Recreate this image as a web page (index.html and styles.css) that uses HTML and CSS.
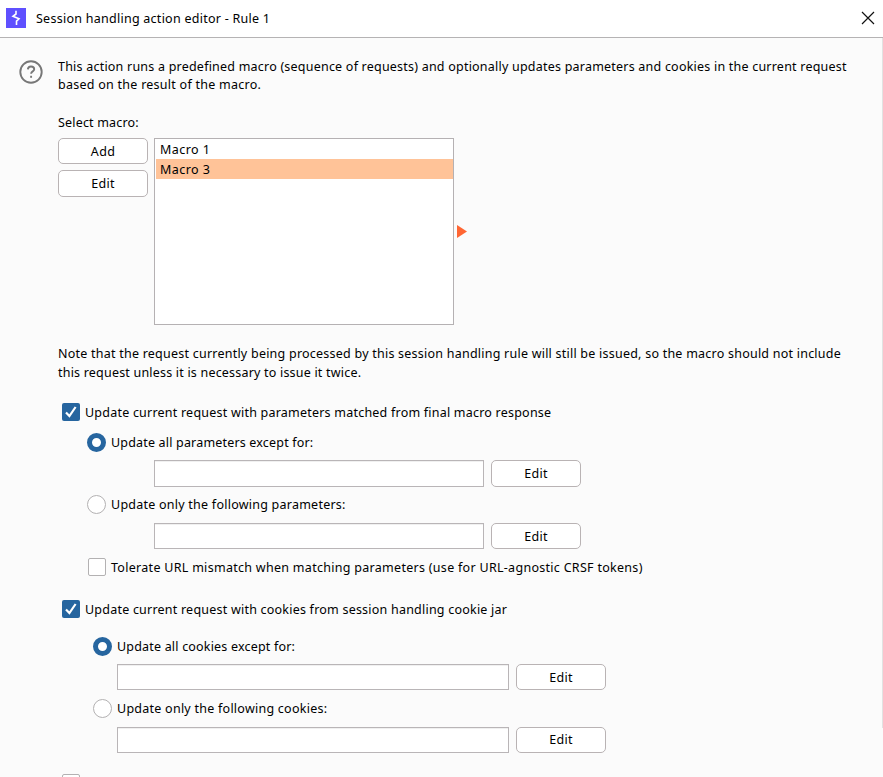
FILE: index.html
```html
<!DOCTYPE html>
<html lang="en">
<head>
<meta charset="utf-8">
<title>Session handling action editor</title>
<link rel="stylesheet" href="styles.css">
</head>
<body>
<div class="dialog">
  <header class="titlebar">
    <svg class="logo" width="20" height="20" viewBox="0 0 20 20"><rect width="20" height="20" fill="#5f50ff"/><path d="M10 2.8V6L7 8.3L13 10.7L10.5 13.2V17" fill="none" stroke="#fff" stroke-width="1.6"/></svg>
    <h1 class="title">Session handling action editor - Rule 1</h1>
    <svg class="close" width="14" height="14" viewBox="0 0 14 14"><path d="M1 1L13 13M13 1L1 13" stroke="#111" stroke-width="1.2"/></svg>
  </header>
  <main class="content">
    <section class="intro">
      <svg class="help" width="24" height="24" viewBox="0 0 24 24" fill="none" stroke="#777" stroke-width="1.9"><circle cx="12" cy="12" r="10.7"/><path d="M8.9 9.4C9 7.3 10.2 6.5 12 6.5C13.9 6.5 15.2 7.6 15.2 9.2C15.2 11.5 12.1 11.3 12.1 13.8"/><path d="M12.1 15.8V17.8"/></svg>
      <p class="para"><span class="i1">This action runs a predefined macro (sequence of requests) and optionally updates parameters and cookies in the current request</span><br><span class="i2">based on the result of the macro.</span></p>
    </section>
    <div class="label"><span>Select macro:</span></div>
    <section class="macros">
      <div class="buttons"><button class="btn">Add</button><button class="btn tall">Edit</button></div>
      <ul class="list"><li>Macro 1</li><li class="selected">Macro 3</li></ul>
      <svg class="arrow" width="10" height="13" viewBox="0 0 10 13"><path d="M0 0L10 6.5L0 13Z" fill="#ff6633"/></svg>
    </section>
    <p class="para note"><span class="n1">Note that the request currently being processed by this session handling rule will still be issued, so the macro should not include</span><br><span class="n2">this request unless it is necessary to issue it twice.</span></p>
    <section class="options">
      <label class="option"><svg class="check" viewBox="0 0 18 18"><rect width="18" height="18" rx="2" fill="#26659f"/><path d="M4 9.5L7.4 13L13.6 4" fill="none" stroke="#fff" stroke-width="2.2"/></svg><span class="o1">Update current request with parameters matched from final macro response</span></label>
      <div class="group params">
        <label class="option"><i class="radio on"></i><span class="o2">Update all parameters except for:</span></label>
        <div class="entry tall"><div class="field"></div><button class="btn tall">Edit</button></div>
        <label class="option"><i class="radio raised"></i><span class="o3">Update only the following parameters:</span></label>
        <div class="entry"><div class="field"></div><button class="btn">Edit</button></div>
        <label class="option tolerate"><i class="box"></i><span class="o4">Tolerate URL mismatch when matching parameters (use for URL-agnostic CRSF tokens)</span></label>
      </div>
      <label class="option second"><svg class="check" viewBox="0 0 18 18"><rect width="18" height="18" rx="2" fill="#26659f"/><path d="M4 9.5L7.4 13L13.6 4" fill="none" stroke="#fff" stroke-width="2.2"/></svg><span class="o5">Update current request with cookies from session handling cookie jar</span></label>
      <div class="group cookies">
        <label class="option"><i class="radio on"></i><span class="o6">Update all cookies except for:</span></label>
        <div class="entry"><div class="field"></div><button class="btn">Edit</button></div>
        <label class="option"><i class="radio"></i><span class="o7">Update only the following cookies:</span></label>
        <div class="entry last"><div class="field"></div><button class="btn">Edit</button></div>
      </div>
      <div class="option third"><i class="box"></i></div>
    </section>
  </main>
  <div class="edge"></div>
</div>
</body>
</html>
```
FILE: styles.css
```css
* { box-sizing: border-box; }
body { margin: 0; overflow: hidden; font: 12.5px/18px "Noto Sans", sans-serif; letter-spacing: .24px; color: #000; }
.dialog { position: relative; width: 883px; height: 777px; overflow: hidden; background: #fbfbfb; }
.titlebar { display: flex; align-items: center; height: 38px; padding: 0 8px 1px 6px; background: #fff; border-bottom: 1px solid #b5b3b4; }
.title { margin: 0 auto 0 10px; padding-top: 2px; font-size: 12.5px; font-weight: 400; letter-spacing: .26px; }
.content { padding: 20px 0 0 58px; }
.intro { display: flex; height: 56px; margin-left: -39px; }
.help { width: 24px; height: 24px; margin: 2px 15px 0 0; flex: none; }
.para { margin: 0; white-space: nowrap; }
.i1 { letter-spacing: .217px; }
.i2 { letter-spacing: .26px; }
.label { height: 24px; line-height: 17px; letter-spacing: .18px; }
.macros { display: flex; height: 187px; }
.buttons { display: flex; flex-direction: column; gap: 6px; width: 96px; }
.btn { display: block; width: 90px; height: 26px; padding: 2px 0 0; border: 1px solid #b9b3b4; border-radius: 5px; background: #fff; color: #000; font: inherit; line-height: 22px; letter-spacing: .3px; }
.btn.tall { height: 27px; padding-bottom: 1px; }
.cookies .last .btn { padding-top: 0; }
.list { width: 300px; height: 187px; margin: 0; padding: 0 0 0 1px; border: 1px solid #b5b1b3; background: #fff; list-style: none; }
.list li { height: 20px; padding: 1px 0 0 4px; line-height: 20px; letter-spacing: .45px; }
.list .selected { background: #ffc398; }
.arrow { margin: 87px 0 0 3px; }
.note { margin-top: 19px; line-height: 19px; height: 56px; }
.n1 { letter-spacing: .232px; }
.n2 { letter-spacing: .2px; }
.option { display: flex; align-items: center; height: 24px; white-space: nowrap; }
.option span { padding-top: 2px; }
.option .o3 { padding-top: 0; }
.check { width: 18px; height: 18px; margin: 0 5px 0 4px; }
.o1, .o5 { letter-spacing: .22px; }
.o2 { letter-spacing: .18px; }
.o4 { letter-spacing: .29px; }
.o6 { letter-spacing: .19px; }
.o7 { letter-spacing: .25px; }
.radio { width: 19px; height: 19px; margin-right: 5px; border: 1px solid #b3b1b2; border-radius: 50%; background: #fff; }
.radio.on { border: 5px solid #26659f; }
.radio.raised { margin-bottom: 1px; }
.box { width: 18px; height: 18px; border: 1px solid #b3b1b2; border-radius: 2px; background: #fff; }
.group { display: flex; flex-direction: column; gap: 6px; }
.params { margin: 6px 0 0 29px; }
.entry { display: flex; gap: 7px; height: 26px; }
.entry.tall { height: 27px; }
.field { border: 1px solid #b9b5b7; background: #fff; box-shadow: inset 0 1px #f0f0f0; }
.params .entry { margin-left: 67px; }
.params .field { width: 330px; }
.tolerate .box { margin: 0 5px 0 1px; }
.second { margin-top: 18px; }
.cookies { margin: 13px 0 0 35px; }
.cookies .entry { margin-left: 24px; }
.cookies .field { width: 392px; }
.cookies .last { margin-top: 1px; }
.third { margin: 18px 0 0 4px; }
.edge { position: absolute; right: 0; top: 38px; width: 1px; height: 690px; background: #e2e2e2; }
```
